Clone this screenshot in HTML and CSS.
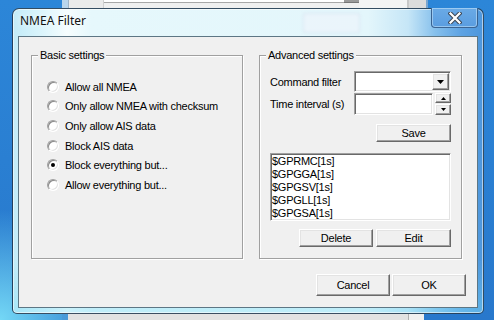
FILE: index.html
```html
<!DOCTYPE html>
<html lang="en">
<head>
  <meta charset="UTF-8">
  <title>NMEA Filter</title>
  <link rel="stylesheet" href="styles.css">
</head>
<body>
<div class="desktop">
  <!-- windows behind the dialog -->
  <div class="bgwin bgwin-top">
    <span class="bg-frame"></span>
    <span class="bg-pad"></span>
    <span class="bg-field"></span>
    <span class="bg-drop"></span>
    <span class="bg-pad2"></span>
    <span class="bg-line"></span>
    <span class="bg-pad3"></span>
  </div>
  <div class="bgwin bgwin-bottom">
    <span class="bg-frame-b"></span>
    <span class="bg-body-b"></span>
    <span class="bg-line-b"></span>
    <span class="bg-edge-b"></span>
  </div>

  <div class="dialog">
    <div class="titlebar">
      <span class="title">NMEA Filter</span>
      <span class="title-space"></span>
      <span class="ghost-btn"></span>
      <button class="close-btn">
        <svg width="14" height="12" viewBox="0 0 14 12">
          <path d="M2.5 1.5 L11.5 10.5 M11.5 1.5 L2.5 10.5" stroke="#3c4654" stroke-width="4.2" stroke-linecap="square"/>
          <path d="M2.5 1.5 L11.5 10.5 M11.5 1.5 L2.5 10.5" stroke="#fff" stroke-width="2.2" stroke-linecap="square"/>
        </svg>
      </button>
    </div>

    <div class="client">
      <div class="groups">
        <div class="group group-basic">
          <span class="legend">Basic settings</span>
          <ul class="radio-list">
            <li class="radio-row"><span class="radio"></span>Allow all NMEA</li>
            <li class="radio-row"><span class="radio"></span>Only allow NMEA with checksum</li>
            <li class="radio-row"><span class="radio"></span>Only allow AIS data</li>
            <li class="radio-row"><span class="radio"></span>Block AIS data</li>
            <li class="radio-row"><span class="radio checked"></span>Block everything but...</li>
            <li class="radio-row"><span class="radio"></span>Allow everything but...</li>
          </ul>
        </div>

        <div class="group group-adv">
          <span class="legend">Advanced settings</span>
          <div class="field-row row-cmd">
            <span class="field-label">Command filter</span>
            <div class="combo">
              <span class="combo-btn raised">
                <svg width="7" height="4" viewBox="0 0 7 4"><polygon points="0,0 7,0 3.5,4" fill="#000"/></svg>
              </span>
            </div>
          </div>
          <div class="field-row row-time">
            <span class="field-label">Time interval (s)</span>
            <div class="edit"></div>
            <div class="spin">
              <span class="spin-btn raised up">
                <svg width="5" height="3" viewBox="0 0 5 3"><polygon points="0,3 5,3 2.5,0" fill="#000"/></svg>
              </span>
              <span class="spin-btn raised down">
                <svg width="5" height="3" viewBox="0 0 5 3"><polygon points="0,0 5,0 2.5,3" fill="#000"/></svg>
              </span>
            </div>
          </div>
          <div class="btn-row save-row">
            <button class="btn raised">Save</button>
          </div>
          <div class="listbox">
            <div class="list-item">$GPRMC[1s]</div>
            <div class="list-item">$GPGGA[1s]</div>
            <div class="list-item">$GPGSV[1s]</div>
            <div class="list-item">$GPGLL[1s]</div>
            <div class="list-item">$GPGSA[1s]</div>
          </div>
          <div class="btn-row list-buttons">
            <button class="btn raised">Delete</button>
            <button class="btn raised">Edit</button>
          </div>
        </div>
      </div>

      <div class="dialog-buttons">
        <button class="btn btn-big raised">Cancel</button>
        <button class="btn btn-big raised">OK</button>
      </div>
    </div>
  </div>
</div>
</body>
</html>
```

FILE: styles.css
```css
html, body {
  margin: 0;
  padding: 0;
}
body {
  font-family: "Liberation Sans", Arial, sans-serif;
  font-size: 11px;
  color: #000;
}
.desktop {
  position: relative;
  width: 494px;
  height: 320px;
  overflow: hidden;
  background:
    radial-gradient(circle at 0 100%, #74d8f6 0, rgba(80, 190, 240, 0) 110px),
    linear-gradient(180deg, #2c86d8 0%, #2878cc 100%);
}

/* background windows */
.bgwin {
  position: absolute;
  display: flex;
}
.bgwin-top {
  left: 62px;
  top: 0;
  width: 366px;
  height: 8px;
  background: #f0f0f0;
}
.bg-frame { width: 6px; background: #b9d5ec; border-right: 1px solid #9fb4c6; }
.bg-pad { width: 34px; background: #ebebeb; border-right: 1px solid #d0d0d0; }
.bg-field {
  width: 240px;
  height: 2px;
  background: #fff;
  border-bottom: 1px solid #a8a8a8;
}
.bg-drop { width: 15px; height: 2px; background: #9a9a9a; border-bottom: 1px solid #777; }
.bg-pad2 { width: 48px; background: #f4f4f4; }
.bg-line { width: 2px; background: #c8c8c8; }
.bg-pad3 { flex: 1; background: #dcdcdc; border-right: 2px solid #7aa6d0; }

.bgwin-bottom {
  left: 62px;
  top: 314px;
  width: 362px;
  height: 6px;
}
.bg-frame-b { width: 6px; background: #4a9ad8; }
.bg-body-b { width: 340px; background: #e2e2e2; }
.bg-line-b { width: 1px; background: #b0b0b0; }
.bg-edge-b { flex: 1; background: #f0f0f0; }

/* dialog frame */
.dialog {
  position: absolute;
  left: 12px;
  top: 8px;
  width: 472px;
  height: 306px;
  box-sizing: border-box;
  border: 1px solid rgba(28, 48, 70, 0.85);
  border-radius: 7px 7px 5px 5px;
  padding: 0 5px 5px 5px;
  display: flex;
  flex-direction: column;
  box-shadow: inset 0 0 0 1px rgba(255, 255, 255, 0.55);
  background:
    linear-gradient(180deg, rgba(255, 255, 255, 0) 0, rgba(255, 255, 255, 0) 250px, rgba(120, 220, 245, 0.35) 300px),
    linear-gradient(90deg, #c2ebf8 0, #dcf5fc 30px, #f6fdfe 54px, #e6f8fc 78px, #e3f6fb 355px, #c6e6f7 395px, #86c0ec 422px, #5ea3e3 448px, #4b95dc 472px);
}
.titlebar {
  height: 27px;
  display: flex;
  flex: none;
}
.title {
  align-self: flex-start;
  padding-left: 2px;
  font-family: "Noto Sans", "Open Sans", sans-serif;
  font-size: 12px;
  line-height: 24px;
  color: #111;
  text-shadow: 0 0 6px rgba(255, 255, 255, 0.9);
}
.title-space {
  flex: 1;
}
.ghost-btn {
  align-self: flex-start;
  margin-top: 4px;
  margin-right: 71px;
  width: 57px;
  height: 20px;
  box-sizing: border-box;
  border: 1px solid rgba(200, 212, 232, 0.5);
  border-radius: 3px;
  background: rgba(240, 244, 252, 0.55);
  filter: blur(1.5px);
}
.close-btn {
  align-self: flex-start;
  margin-top: -1px;
  width: 47px;
  height: 20px;
  padding: 0;
  box-sizing: border-box;
  border: 1px solid rgba(40, 70, 110, 0.7);
  border-top: none;
  border-radius: 0 0 4px 4px;
  background: linear-gradient(180deg, #6aaae6 0%, #5a9de0 100%);
  box-shadow: inset 0 0 0 1px rgba(200, 230, 250, 0.55);
  display: flex;
  align-items: center;
  justify-content: center;
}

/* client area */
.client {
  flex: 1;
  box-sizing: border-box;
  border: 1px solid #5d7684;
  background: #f0f0f0;
  padding: 18px 11px 0 12px;
  display: flex;
  flex-direction: column;
}
.groups {
  display: flex;
  gap: 16px;
}
.group {
  box-sizing: border-box;
  height: 204px;
  border: 1px solid #a0a0a0;
  box-shadow: inset 1px 1px 0 #fff, 1px 1px 0 #fff;
  display: flex;
  flex-direction: column;
}
.group-basic {
  width: 212px;
  padding-left: 15px;
}
.group-adv {
  width: 203px;
  padding: 0 10px;
}
.legend {
  align-self: flex-start;
  height: 14px;
  line-height: 14px;
  margin: -8px 0 0 -9px;
  padding: 0 2px;
  background: #f0f0f0;
  letter-spacing: -0.25px;
}
.group-adv .legend {
  margin-left: -4px;
}
.radio-list {
  list-style: none;
  margin: 15px 0 0 0;
  padding: 0;
}
.radio-row {
  display: flex;
  align-items: center;
  height: 19.6px;
  letter-spacing: -0.25px;
}
.radio {
  flex: none;
  width: 12px;
  height: 12px;
  box-sizing: border-box;
  margin-right: 6px;
  border-radius: 50%;
  border: 1px solid;
  border-color: #a0a0a0 #fff #fff #a0a0a0;
  background: #fff;
  box-shadow: inset 1px 1px 0 #8a8a8a, inset -1px -1px 0 #e3e3e3;
  display: flex;
  align-items: center;
  justify-content: center;
}
.radio.checked::after {
  content: "";
  width: 4px;
  height: 4px;
  border-radius: 50%;
  background: #000;
}

/* advanced settings */
.field-row {
  display: flex;
  align-items: center;
  letter-spacing: -0.25px;
}
.row-cmd {
  margin-top: 9px;
  height: 21px;
}
.row-time {
  margin-top: 1px;
  height: 22px;
}
.field-label {
  flex: 1;
}
.combo, .edit, .listbox {
  box-sizing: border-box;
  background: #fff;
  border: 1px solid;
  border-color: #a0a0a0 #fff #fff #a0a0a0;
  box-shadow: inset 1px 1px 0 #696969, inset -1px -1px 0 #e3e3e3;
}
.combo {
  width: 97px;
  height: 21px;
  padding: 1px;
  display: flex;
  justify-content: flex-end;
}
.combo-btn {
  width: 17px;
  display: flex;
  align-items: center;
  justify-content: center;
}
.edit {
  width: 79px;
  height: 22px;
  margin-right: 2px;
}
.spin {
  width: 16px;
  height: 22px;
  display: flex;
  flex-direction: column;
  gap: 1px;
}
.spin-btn {
  display: flex;
  align-items: center;
  justify-content: center;
}
.spin-btn.up { height: 10px; }
.spin-btn.down { height: 11px; }

.raised {
  box-sizing: border-box;
  background: #f0f0f0;
  border: 1px solid;
  border-color: #fff #696969 #696969 #fff;
  box-shadow: inset -1px -1px 0 #a0a0a0, inset 1px 1px 0 #e3e3e3;
}
.btn-row {
  display: flex;
  justify-content: flex-end;
  gap: 3px;
}
.save-row {
  margin-top: 9px;
}
.btn {
  width: 75px;
  height: 18px;
  padding: 0;
  font-family: "Liberation Sans", Arial, sans-serif;
  font-size: 11px;
  letter-spacing: -0.25px;
  color: #000;
}
.listbox {
  margin-top: 11px;
  height: 68px;
  padding: 1px 1px;
  line-height: 13px;
  letter-spacing: -0.25px;
}
.list-buttons {
  margin-top: 8px;
}
.list-buttons .btn:first-child {
  width: 74px;
}

.dialog-buttons {
  margin-top: 15px;
  display: flex;
  justify-content: flex-end;
  gap: 2px;
}
.btn-big {
  width: 74px;
  height: 22px;
}
```
